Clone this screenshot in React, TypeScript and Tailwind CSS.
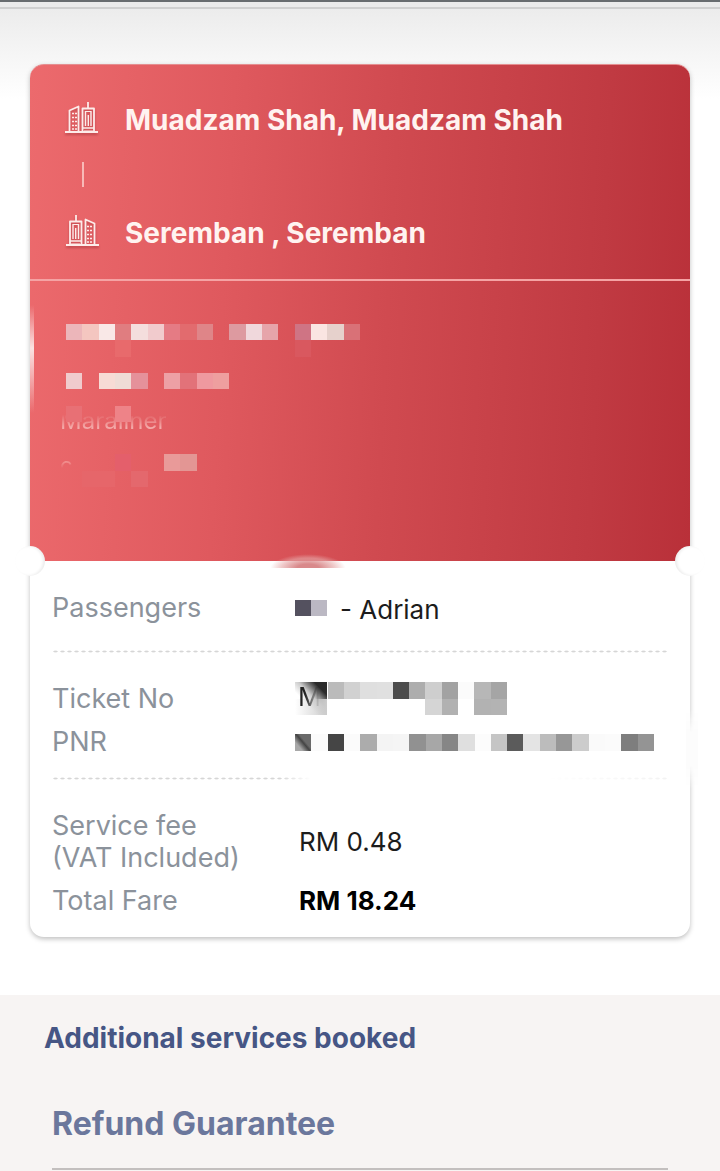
import React from "react";
import clsx from "clsx";

interface MosaicProps {
  cols: number;
  rows: number;
  cells: [number, number, string][];
  className?: string;
}

// Censoring blocks: each cell is [column, row, colour]
const Mosaic: React.FC<MosaicProps> = ({ cols, rows, cells, className }) => (
  <svg
    viewBox={`0 0 ${cols} ${rows}`}
    preserveAspectRatio="none"
    shapeRendering="crispEdges"
    aria-hidden="true"
    className={clsx("block shrink-0", className)}>
    {cells.map(([x, y, fill]) => (
      <rect key={`${x}-${y}`} x={x} y={y} width="1" height="1" fill={fill} />
    ))}
  </svg>
);

const tripCells: [number, number, string][] = [
  [0, 0, "#ecb6ba"],
  [1, 0, "#f4c6c0"],
  [2, 0, "#f9e8e7"],
  [3, 0, "#e07d80"],
  [4, 0, "#f4dedd"],
  [5, 0, "#f1cbcd"],
  [6, 0, "#e57b84"],
  [7, 0, "#e26b6e"],
  [8, 0, "#df8588"],
  [10, 0, "#dd9aa0"],
  [11, 0, "#f0d8dc"],
  [12, 0, "#e6a4aa"],
  [14, 0, "#cf7484"],
  [15, 0, "#fae5e2"],
  [16, 0, "#e6d1cc"],
  [17, 0, "#d97177"],
  [3, 1, "#e86a6c"],
  [14, 1, "#d9585f"],
  [0, 3, "#f0cbcd"],
  [2, 3, "#f7dbd5"],
  [3, 3, "#efdcd6"],
  [4, 3, "#e5919a"],
  [6, 3, "#eda0a5"],
  [7, 3, "#e27279"],
  [8, 3, "#ef999f"],
  [9, 3, "#ee9f9f"],
  [0, 5, "#e87075"],
  [3, 5, "#ee8388"],
  [3, 8, "#e45f6b"],
  [6, 8, "#e99a99"],
  [7, 8, "#e39694"],
  [1, 9, "#e6666a"],
  [2, 9, "#e6666a"],
  [4, 9, "#e4686d"],
];

const passengerCells: [number, number, string][] = [
  [0, 0, "#54515f"],
  [1, 0, "#bbb8c3"],
];

const ticketCells: [number, number, string][] = [
  [2, 0, "#bbbbbb"],
  [3, 0, "#d1d1d1"],
  [4, 0, "#dfdfdf"],
  [5, 0, "#e0e0e0"],
  [6, 0, "#4c4c4c"],
  [7, 0, "#adadad"],
  [8, 0, "#cecece"],
  [9, 0, "#a2a2a2"],
  [10, 0, "#fbfbfb"],
  [11, 0, "#b7b7b7"],
  [12, 0, "#a5a5a5"],
  [8, 1, "#d5d5d5"],
  [9, 1, "#b1b1b1"],
  [11, 1, "#b2b2b2"],
  [12, 1, "#b3b3b3"],
];

const pnrCells: [number, number, string][] = [
  [1, 0, "#fbfbfb"],
  [2, 0, "#454545"],
  [3, 0, "#fbfbfb"],
  [4, 0, "#acacac"],
  [5, 0, "#f4f4f4"],
  [6, 0, "#f5f5f5"],
  [7, 0, "#919191"],
  [8, 0, "#a7a7a7"],
  [9, 0, "#868686"],
  [10, 0, "#dfdfdf"],
  [11, 0, "#fcfcfc"],
  [12, 0, "#c5c5c5"],
  [13, 0, "#5b5b5b"],
  [14, 0, "#e4e4e4"],
  [15, 0, "#bcbcbc"],
  [16, 0, "#979797"],
  [17, 0, "#cccccc"],
  [18, 0, "#fafafa"],
  [19, 0, "#fbfbfb"],
  [20, 0, "#7e7e7e"],
  [21, 0, "#949494"],
];

const CityIcon: React.FC<{ flipped?: boolean }> = ({ flipped }) => (
  <svg
    viewBox="0 0 34 34"
    fill="none"
    stroke="#fdecea"
    aria-hidden="true"
    className={clsx(
      "size-[34px] shrink-0 drop-shadow-[0_2px_1px_rgba(120,20,30,0.35)]",
      flipped && "-scale-x-100"
    )}>
    <path d="M0 31H33" strokeWidth="2" />
    <path d="M4.5 31V9.5L13.5 5.5V31" strokeWidth="1.8" strokeLinejoin="round" />
    <path d="M7 12.5H12M7 16.5H12M7 20.5H12M7 24.5H12M7 28H12" strokeWidth="1.7" strokeDasharray="2 1" />
    <path d="M17.5 31V7.500H29V31" strokeWidth="1.8" strokeLinejoin="round" />
    <path d="M23 7V1" strokeWidth="1.8" />
    <path d="M20.5 10V25M23.3 14V25M26 10V25" strokeWidth="1.4" />
    <path d="M20.5 10.5H26" strokeWidth="1" />
    <path d="M18 27H29" strokeWidth="1.5" />
    <path d="M19 29.5H28" strokeWidth="1" opacity="0.5" />
  </svg>
);

const DottedLine: React.FC<{ faded?: boolean }> = ({ faded }) => (
  <div
    className={clsx(
      "h-[3px] bg-[radial-gradient(closest-side,#d6d6d6_40%,transparent_85%)] bg-[length:7px_3px] bg-repeat-x",
      faded &&
        "mask-[linear-gradient(to_right,black_37%,transparent_42%,transparent_80%,rgba(0,0,0,0.3))]"
    )}
  />
);

const Row: React.FC<{ label: React.ReactNode; children: React.ReactNode }> = ({ label, children }) => (
  <div className="flex items-center">
    <dt className="w-[243px] shrink-0 text-[27px] text-[#8b929b]">{label}</dt>
    <dd className="flex min-w-0 flex-1 items-center text-[#1c1c1c]">{children}</dd>
  </div>
);

const App: React.FC = () => {
  return (
    <div className="min-h-screen bg-white font-['Inter',sans-serif] text-[26px] leading-8">
      {/* Bottom edge of the app bar */}
      <div className="h-[9px] border-t-2 border-b-2 border-t-[#686c6f] border-b-[#d0d0d0] bg-[#ebebeb]" />

      <main className="bg-linear-to-b from-[#ececec] to-white to-[90px] px-[30px] pt-[55px] pb-[58px]">
        <article className="relative rounded-[14px] bg-white shadow-[0_2px_5px_rgba(0,0,0,0.25)]">
          <header className="rounded-t-[14px] border-t border-[#e58e90] bg-[linear-gradient(93deg,#ec6a6d_0%,#df595e_30%,#d04a50_54%,#c03a42_85%,#b93039_100%)]">
            {/* Route */}
            <div className="h-[216px] border-b-2 border-[#f5a3a4] pt-[35px] pl-[35px] text-[28px] font-bold text-[#fff3f0]">
              <div className="flex items-center gap-[26px]">
                <CityIcon />
                <h1 className="pt-1">Muadzam Shah, Muadzam Shah</h1>
              </div>
              <div className="my-[26px] ml-[17px] h-[25px] w-[2px] bg-[#f8b9b7]" />
              <div className="flex items-center gap-[26px]">
                <CityIcon flipped />
                <p className="pt-1">Seremban , Seremban</p>
              </div>
            </div>

            {/* Trip details */}
            <div className="relative h-[280px] pt-[124px] pl-[30px] text-[24px]">
              <p className="bg-linear-to-b from-transparent from-30% to-[#f3aaa9] to-70% bg-clip-text text-transparent">
                Maraliner
              </p>
              <p className="mt-3 bg-linear-to-b from-[#f0908f] from-40% to-transparent to-60% bg-clip-text text-[22px] text-transparent">
                c
              </p>
              <Mosaic
                cols={18}
                rows={10}
                cells={tripCells}
                className="absolute top-[43px] left-9 h-[163px] w-[294px]"
              />
              <div className="absolute top-6 left-0 h-[108px] w-1 bg-linear-to-b from-transparent via-[#fbe3e3] via-40% to-transparent" />
            </div>
          </header>

          {/* Notches on both sides of the tear line */}
          <div className="absolute top-[482px] -left-[15px] size-[30px] rounded-full bg-white shadow-[inset_-2px_0_3px_rgba(0,0,0,0.08)]" />
          <div className="absolute top-[482px] -right-[15px] size-[30px] rounded-full bg-white shadow-[inset_2px_0_3px_rgba(0,0,0,0.08)]" />
          <div className="absolute top-[490px] left-[240px] h-[14px] w-[76px] bg-[radial-gradient(ellipse_at_bottom,#d9898b_20%,rgba(230,170,170,0.6)_50%,transparent_70%)]" />
          {/* Smudge over the right border */}
          <div className="absolute top-[645px] -right-2 h-20 w-3 bg-[#fcfcfc] mask-[linear-gradient(to_bottom,transparent,black_30%,black_70%,transparent)]" />

          <dl className="px-[22px] pb-5">
            <div className="pt-[29px] pb-6">
              <Row label="Passengers">
                <Mosaic cols={2} rows={1} cells={passengerCells} className="mr-[13px] h-4 w-8" />
                <span className="pt-1">- Adrian</span>
              </Row>
            </div>
            <DottedLine />
            <div className="flex flex-col gap-[11px] pt-[29px] pb-[19px]">
              <Row label="Ticket No">
                <div className="relative">
                  <div className="absolute inset-y-0 left-0 w-8 bg-[linear-gradient(to_bottom_left,#2b2b2b_20%,#cccccc_45%,transparent_65%)]" />
                  <div className="absolute bottom-0 left-0 h-4 w-8 bg-linear-to-r from-transparent to-[#cccccc]" />
                  <span className="absolute -top-px left-[3px] bg-linear-to-r from-[#222222] from-30% to-transparent to-90% bg-clip-text text-transparent">
                    M
                  </span>
                  <Mosaic
                    cols={13}
                    rows={2}
                    cells={ticketCells}
                    className="relative h-[33px] w-[212px]"
                  />
                </div>
              </Row>
              <Row label="PNR">
                <div className="relative bg-[linear-gradient(50deg,#a8a8a8_25%,#444444_50%,#6a6a6a_60%)] bg-[length:16px_100%] bg-no-repeat">
                  <Mosaic cols={22} rows={1} cells={pnrCells} className="h-[17px] w-[359px]" />
                </div>
              </Row>
            </div>
            <DottedLine faded />
            <div className="flex flex-col gap-[11px] pt-[30px]">
              <Row
                label={
                  <>
                    Service fee
                    <br />
                    (VAT Included)
                  </>
                }>
                <span className="pl-1">RM 0.48</span>
              </Row>
              <Row label="Total Fare">
                <strong className="pl-1 font-bold text-black">RM 18.24</strong>
              </Row>
            </div>
          </dl>
        </article>
      </main>

      {/* Additional services */}
      <section className="bg-[#f7f4f3] px-[52px] pt-[27px] pb-px">
        <h2 className="-ml-2 text-[28px] font-bold text-[#465685]">Additional services booked</h2>
        <h3 className="mt-[52px] border-b-2 border-[#c3bfbe] pb-[26px] text-[32px] leading-9 font-bold text-[#6b779c]">
          Refund Guarantee
        </h3>
      </section>
    </div>
  );
};

export default App;
